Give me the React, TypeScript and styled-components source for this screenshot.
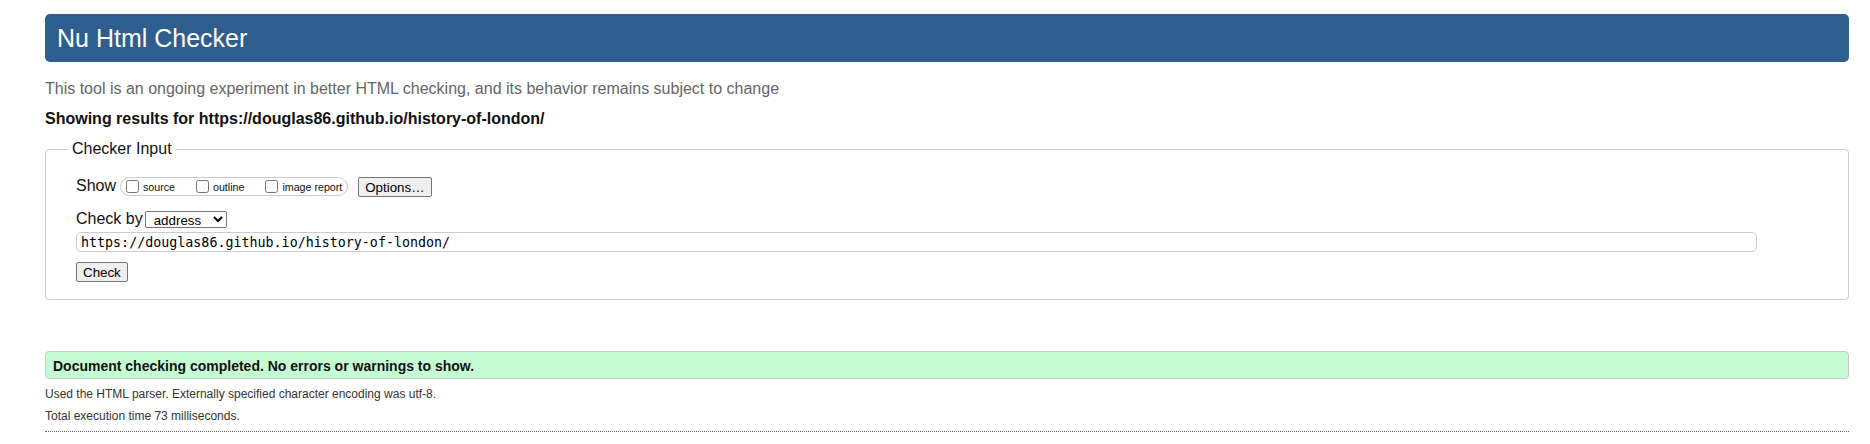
import React from "react";
import styled, { createGlobalStyle } from "styled-components";

const GlobalStyle = createGlobalStyle`
  html, body {
    margin: 0;
    padding: 0;
    background: #fff;
  }
  body {
    font-family: "Liberation Sans", Arial, Helvetica, sans-serif;
    color: #000;
  }
`;

const Page = styled.div`
  padding: 14px 21px 0 45px;
`;

const Header = styled.header`
  height: 48px;
  box-sizing: border-box;
  background: #2e5e8e;
  border-radius: 5px;
  display: flex;
  align-items: center;
  padding-left: 12px;
`;

const Title = styled.h1`
  margin: 0;
  font-size: 25px;
  font-weight: normal;
  line-height: 28px;
  color: #fff;
`;

const Intro = styled.p`
  margin: 17px 0 0;
  font-size: 16px;
  line-height: 20px;
  color: #666;
`;

const Results = styled.p`
  margin: 10px 0 0;
  font-size: 16px;
  line-height: 20px;
  font-weight: bold;
  color: #111;
`;

const Fieldset = styled.fieldset`
  margin: 10px 0 0;
  padding: 0 0 17px 22px;
  border: 1px solid #ccc;
  border-radius: 4px;
  min-width: 0;
`;

const Legend = styled.legend`
  padding: 0 4px;
  font-size: 16px;
  line-height: 20px;
  color: #111;
`;

const FormBody = styled.div`
  padding-left: 8px;
  display: flex;
  flex-direction: column;
  align-items: flex-start;
`;

const Row = styled.div<{ $top: number }>`
  display: flex;
  align-items: flex-start;
  margin-top: ${(p) => p.$top}px;
  width: 100%;
`;

const RowLabel = styled.span<{ $shift?: number }>`
  font-size: 16px;
  line-height: 20px;
  margin-top: ${(p) => p.$shift ?? 0}px;
  color: #111;
`;

const CheckGroup = styled.span`
  display: inline-flex;
  align-items: center;
  gap: 21px;
  height: 19px;
  box-sizing: border-box;
  border: 1px solid #ccc;
  border-radius: 10px;
  padding: 0 5px;
  margin-left: 4px;
`;

const SmallLabel = styled.label`
  display: inline-flex;
  align-items: center;
  font-size: 10.67px;
  color: #111;
`;

const Box = styled.input`
  width: 13px;
  height: 13px;
  margin: -1px 4px 0 0;
`;

const Button = styled.button<{ $left?: number }>`
  height: 20px;
  box-sizing: border-box;
  margin: 0 0 0 ${(p) => p.$left ?? 0}px;
  padding: 0 6px;
  font-family: "Liberation Sans", Arial, sans-serif;
  font-size: 13.33px;
  color: #000;
  background: #efefef;
  border: 1px solid #767676;
  border-radius: 2px;
`;

const Select = styled.select`
  width: 82px;
  height: 17px;
  box-sizing: border-box;
  margin: 2px 0 0 2px;
  padding: 0 0 0 4px;
  font-family: "Liberation Sans", Arial, sans-serif;
  font-size: 13.33px;
  color: #000;
  background: #fff;
  border: 1px solid #767676;
  border-radius: 2px;
`;

const UrlInput = styled.input`
  width: 1681px;
  max-width: 100%;
  height: 20px;
  box-sizing: border-box;
  margin: 0;
  padding: 0 4px;
  font-family: "DejaVu Sans Mono", monospace;
  font-size: 13.33px;
  color: #000;
  border: 1px solid #ccc;
  border-radius: 5px;
`;

const Success = styled.div`
  margin-top: 51px;
  height: 28px;
  box-sizing: border-box;
  display: flex;
  align-items: center;
  padding: 2px 7px 0;
  background: #c5fed2;
  border: 1px solid #c8c8c8;
  border-radius: 4px;
  font-size: 14px;
  font-weight: bold;
  color: #111;
`;

const Note = styled.p<{ $top: number }>`
  margin: ${(p) => p.$top}px 0 0;
  font-size: 12px;
  line-height: 22px;
  color: #333;
`;

const Rule = styled.div`
  margin-top: 4px;
  border-top: 1px dotted #666;
`;

export default function App() {
  return (
    <>
      <GlobalStyle />
      <Page>
        <Header>
          <Title>Nu Html Checker</Title>
        </Header>
        <Intro>
          This tool is an ongoing experiment in better HTML checking, and its
          behavior remains subject to change
        </Intro>
        <Results>
          Showing results for https://douglas86.github.io/history-of-london/
        </Results>
        <Fieldset>
          <Legend>Checker Input</Legend>
          <FormBody>
            <Row $top={18}>
              <RowLabel $shift={-1}>Show</RowLabel>
              <CheckGroup>
                <SmallLabel>
                  <Box type="checkbox" />
                  source
                </SmallLabel>
                <SmallLabel>
                  <Box type="checkbox" />
                  outline
                </SmallLabel>
                <SmallLabel>
                  <Box type="checkbox" />
                  image report
                </SmallLabel>
              </CheckGroup>
              <Button type="button" $left={10}>
                Options…
              </Button>
            </Row>
            <Row $top={12}>
              <RowLabel>Check by</RowLabel>
              <Select defaultValue="address">
                <option value="address">address</option>
                <option value="file">file upload</option>
                <option value="text">text input</option>
              </Select>
            </Row>
            <Row $top={3}>
              <UrlInput
                type="url"
                defaultValue="https://douglas86.github.io/history-of-london/"
              />
            </Row>
            <Row $top={10}>
              <Button type="button">Check</Button>
            </Row>
          </FormBody>
        </Fieldset>
        <Success>Document checking completed. No errors or warnings to show.</Success>
        <Note $top={4}>
          Used the HTML parser. Externally specified character encoding was
          utf-8.
        </Note>
        <Note $top={0}>Total execution time 73 milliseconds.</Note>
        <Rule />
      </Page>
    </>
  );
}
